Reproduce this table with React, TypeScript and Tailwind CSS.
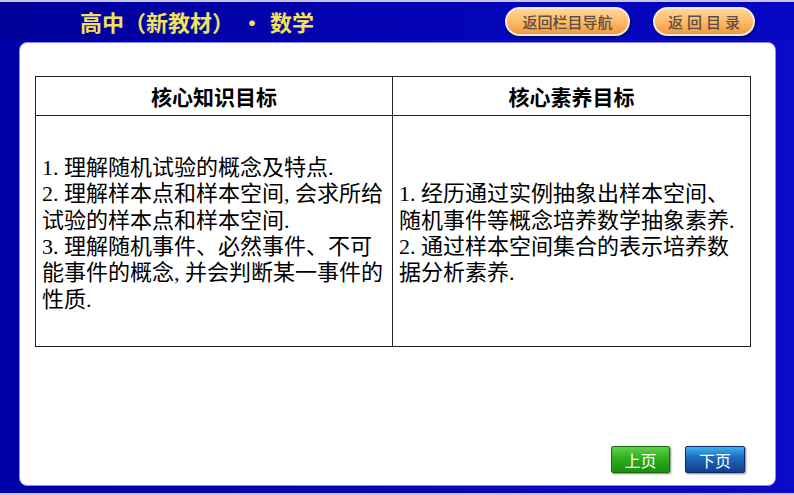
import React from "react";

const body = '"Noto Sans CJK SC", sans-serif';
const sans = '"Noto Sans CJK SC", sans-serif';

const leftLines = [
  "1.理解随机试验的概念及特点.",
  "2.理解样本点和样本空间,会求所给",
  "试验的样本点和样本空间.",
  "3.理解随机事件、必然事件、不可",
  "能事件的概念,并会判断某一事件的",
  "性质.",
];
const rightLines = [
  "1.经历通过实例抽象出样本空间、",
  "随机事件等概念培养数学抽象素养.",
  "2.通过样本空间集合的表示培养数",
  "据分析素养.",
];

function Line({ text }: { text: string }) {
  const chars = Array.from(text);
  const out: React.ReactNode[] = [];
  let buf = "";
  chars.forEach((c, i) => {
    if (/[0-9.,]/.test(c)) {
      if (buf) {
        out.push(<span key={"b" + i}>{buf}</span>);
        buf = "";
      }
      out.push(
        <span key={"a" + i} className="inline-block w-[11px] leading-[20px]" style={{ fontFamily: '"Liberation Serif", serif' }}>
          {c}
        </span>
      );
    } else {
      buf += c;
    }
  });
  if (buf) out.push(<span key="end">{buf}</span>);
  return <div className="whitespace-nowrap h-[26.3px] leading-[26.3px]">{out}</div>;
}

function Lines({ lines }: { lines: string[] }) {
  return (
    <div className="flex flex-col justify-center h-full pl-[6px] text-[22px] text-black" style={{ fontFamily: body }}>
      {lines.map((l, i) => (
        <Line key={i} text={l} />
      ))}
    </div>
  );
}

export default function App() {
  return (
    <div className="w-[794px] h-[495px] overflow-hidden relative bg-[linear-gradient(90deg,#0000a8_0%,#0606bc_60%,#0a0ac8_100%)] border-t-[2px] border-[#c4c6dc] flex flex-col">
      {/* header */}
      <div className="h-[38px] flex items-center shrink-0 bg-[linear-gradient(90deg,#00009a_0%,#0404b4_50%,#0606c4_100%)]">
        <div className="pl-[80px] text-[22px] font-bold text-[#f2e25a] whitespace-nowrap leading-none" style={{ fontFamily: sans }}>
          高中（新教材）<span className="inline-block w-[36px] text-center">·</span>数学
        </div>
        <div className="flex-1" />
        <div className="flex items-center gap-[23px] pr-[39px]">
          <div className="w-[125px] h-[29px] rounded-full border-[2px] border-[#f4e8dc] bg-[linear-gradient(180deg,#ffd69a_0%,#fbb866_55%,#f09a3c_100%)] shadow-[1px_2px_2px_rgba(0,0,0,0.45)] flex items-center justify-center text-[15px] font-medium text-[#5e4e42] leading-none" style={{ fontFamily: sans }}>
            返回栏目导航
          </div>
          <div className="w-[102px] h-[29px] rounded-full border-[2px] border-[#f4e8dc] bg-[linear-gradient(180deg,#ffd69a_0%,#fbb866_55%,#f09a3c_100%)] shadow-[1px_2px_2px_rgba(0,0,0,0.45)] flex items-center justify-center text-[15px] font-medium text-[#5e4e42] leading-none tracking-[4px] pl-[4px]" style={{ fontFamily: sans }}>
            返回目录
          </div>
        </div>
      </div>

      {/* panel */}
      <div className="ml-[19px] mt-[2px] w-[757px] h-[444px] bg-white rounded-[8px] border border-[#8a8aff] flex flex-col">
        <div className="pt-[33px] pl-[15px]">
          <div className="w-[716px] border border-[#222] flex flex-col">
            <div className="h-[39px] flex border-b border-[#222]">
              <div className="w-[357px] border-r border-[#222] flex items-center justify-center text-[21px] font-bold text-black leading-none" style={{ fontFamily: sans }}>
                核心知识目标
              </div>
              <div className="flex-1 flex items-center justify-center text-[21px] font-bold text-black leading-none" style={{ fontFamily: sans }}>
                核心素养目标
              </div>
            </div>
            <div className="h-[230px] flex">
              <div className="w-[357px] border-r border-[#222]">
                <Lines lines={leftLines} />
              </div>
              <div className="flex-1">
                <Lines lines={rightLines} />
              </div>
            </div>
          </div>
        </div>
        <div className="flex-1" />
        <div className="flex justify-end gap-[15px] pr-[30px] pb-[12px]">
          <div className="w-[59px] h-[27px] rounded-[2px] border border-[#1a6a10] bg-[linear-gradient(180deg,#5ed24a_0%,#2fae1e_45%,#18900e_100%)] shadow-[1px_1px_2px_rgba(0,0,0,0.5)] flex items-center justify-center text-white text-[16px] leading-none" style={{ fontFamily: sans }}>
            上页
          </div>
          <div className="w-[60px] h-[27px] rounded-[2px] border border-[#0e2e6a] bg-[linear-gradient(180deg,#3ab4ee_0%,#1e6cc0_40%,#163c8e_100%)] shadow-[1px_1px_2px_rgba(0,0,0,0.5)] flex items-center justify-center text-white text-[16px] leading-none" style={{ fontFamily: sans }}>
            下页
          </div>
        </div>
      </div>
      <div className="flex-1" />
      <div className="h-[2px] bg-[#c4c6dc]" />
    </div>
  );
}
